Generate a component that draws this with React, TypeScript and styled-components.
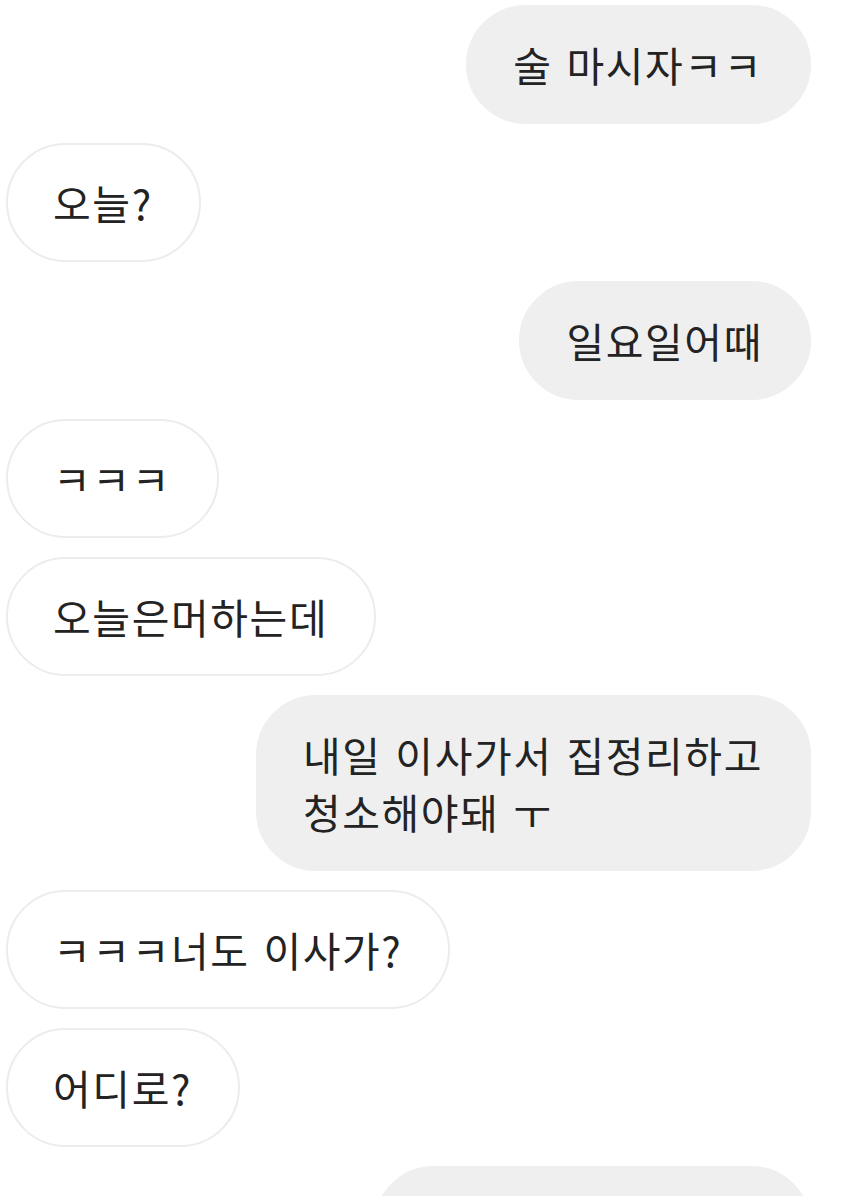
import React from "react";
import styled, { createGlobalStyle } from "styled-components";

type Side = "me" | "them";

type Message = {
  side: Side;
  lines: string[];
};

const messages: Message[] = [
  { side: "me", lines: ["술 마시자ㅋㅋ"] },
  { side: "them", lines: ["오늘?"] },
  { side: "me", lines: ["일요일어때"] },
  { side: "them", lines: ["ㅋㅋㅋ"] },
  { side: "them", lines: ["오늘은머하는데"] },
  { side: "me", lines: ["내일 이사가서 집정리하고", "청소해야돼 ㅜ"] },
  { side: "them", lines: ["ㅋㅋㅋ너도 이사가?"] },
  { side: "them", lines: ["어디로?"] },
  { side: "me", lines: ["나 수원으로 이사가"] },
];

const GlobalStyle = createGlobalStyle`
  html, body {
    margin: 0;
    padding: 0;
    background: #ffffff;
    overflow: hidden;
  }
  body {
    font-family: "Noto Sans CJK KR", Roboto, "Noto Sans", sans-serif;
    color: #232323;
  }
`;

const Thread = styled.div`
  display: flex;
  flex-direction: column;
  gap: 19px;
  padding: 5px 39px 0 6px;
  height: 1196px;
  box-sizing: border-box;
  overflow: hidden;
`;

const Row = styled.div<{ $side: Side }>`
  display: flex;
  justify-content: ${(p) => (p.$side === "me" ? "flex-end" : "flex-start")};
`;

const Bubble = styled.div<{ $side: Side }>`
  box-sizing: border-box;
  padding: 29px 46px 29px 45px;
  border-radius: 60px;
  font-size: 41px;
  line-height: 57px;
  letter-spacing: 1.6px;
  word-spacing: 3px;
  white-space: nowrap;
  background: ${(p) => (p.$side === "me" ? "#efefef" : "#ffffff")};
  border: 2px solid ${(p) => (p.$side === "me" ? "#efefef" : "#ececec")};
`;

const Line = styled.div`
  display: block;
`;

const App: React.FC = () => {
  return (
    <>
      <GlobalStyle />
      <Thread>
        {messages.map((m, i) => (
          <Row key={i} $side={m.side}>
            <Bubble $side={m.side}>
              {m.lines.map((l, j) => (
                <Line key={j}>{l}</Line>
              ))}
            </Bubble>
          </Row>
        ))}
      </Thread>
    </>
  );
};

export default App;
